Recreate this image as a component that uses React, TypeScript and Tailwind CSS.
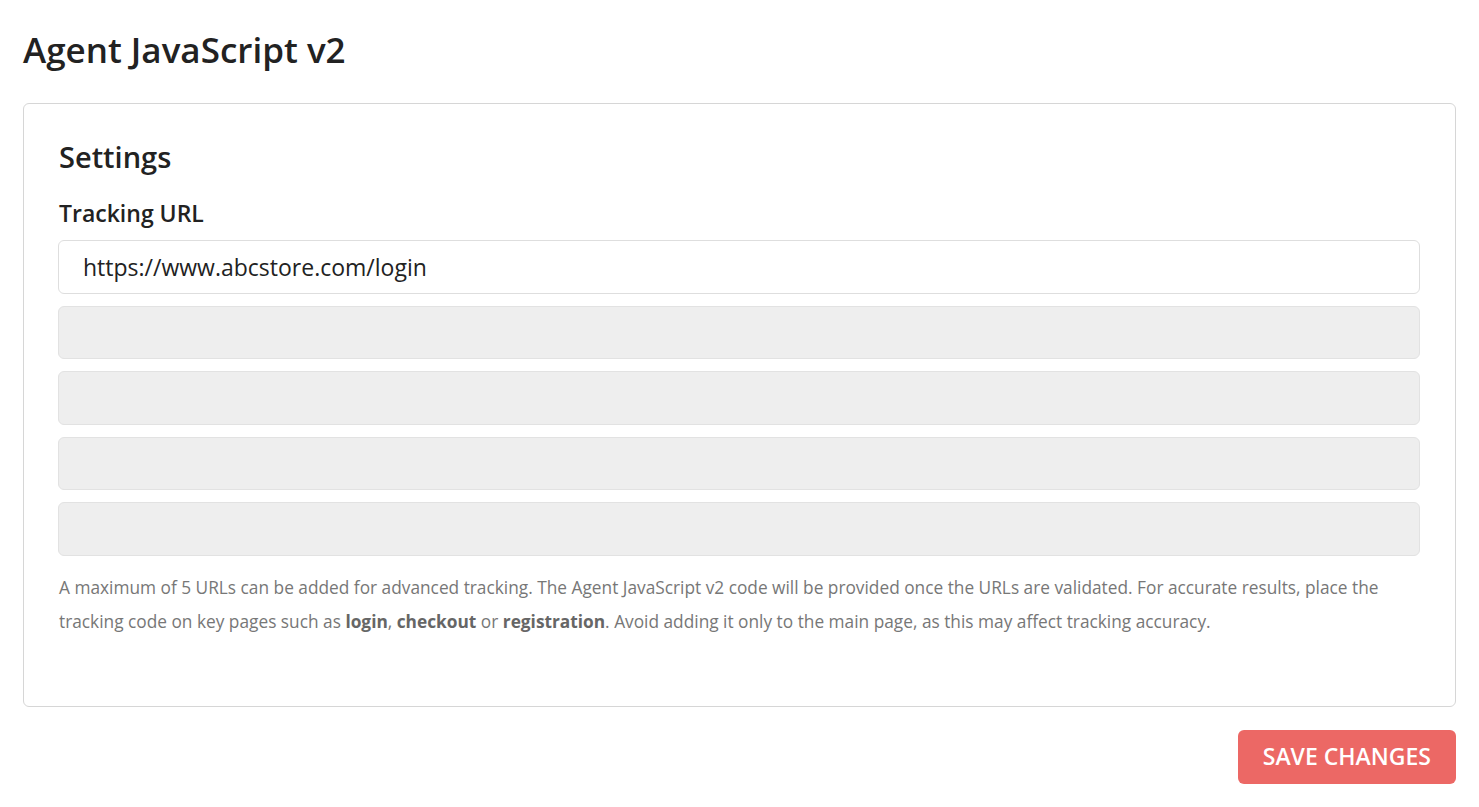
import React from "react";

export default function App() {
  const font = { fontFamily: '"Open Sans", "Noto Sans", sans-serif' };
  return (
    <div className="min-h-screen bg-white px-[23px] pt-[26px] pb-6 text-[#222222]" style={font}>
      <h1 className="text-[35px] leading-[48px] font-semibold text-[#222222]">Agent JavaScript v2</h1>
      <div className="mt-[29px] rounded-[6px] border border-[#d6d6d6] bg-white pl-[34px] pr-[35px] pt-[33px] pb-[67px]">
        <h2 className="ml-px text-[29px] leading-[40px] font-semibold text-[#222222]">Settings</h2>
        <div className="ml-px mt-[21px] text-[23px] leading-[30px] font-semibold text-[#222222]">Tracking URL</div>
        <div className="mt-[12px] flex flex-col gap-[12px]">
          <div className="flex h-[53.5px] items-center rounded-[6px] border border-[#dedede] bg-white px-[24px] text-[23px] text-[#222222]">
            https://www.abcstore.com/login
          </div>
          <div className="h-[53.5px] rounded-[6px] border border-[#e2e2e2] bg-[#eeeeee]" />
          <div className="h-[53.5px] rounded-[6px] border border-[#e2e2e2] bg-[#eeeeee]" />
          <div className="h-[53.5px] rounded-[6px] border border-[#e2e2e2] bg-[#eeeeee]" />
          <div className="h-[53.5px] rounded-[6px] border border-[#e2e2e2] bg-[#eeeeee]" />
        </div>
        <p className="ml-px mt-[15px] text-[17.3px] leading-[34px] text-[#777777]">
          A maximum of 5 URLs can be added for advanced tracking. The Agent JavaScript v2 code will be provided once the URLs are validated. For accurate results, place the tracking code on key pages such as <b className="font-bold text-[#666666]">login</b>, <b className="font-bold text-[#666666]">checkout</b> or <b className="font-bold text-[#666666]">registration</b>. Avoid adding it only to the main page, as this may affect tracking accuracy.
        </p>
      </div>
      <div className="mt-[23px] flex justify-end">
        <button className="h-[54px] rounded-[6px] bg-[#ec6865] px-[25px] text-[23px] font-semibold uppercase text-white">
          Save Changes
        </button>
      </div>
    </div>
  );
}
